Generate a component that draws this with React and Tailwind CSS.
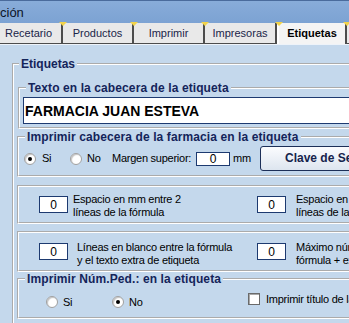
import React from "react";

function Radio({ on }) {
  return (
    <span className="flex h-[12px] w-[12px] shrink-0 items-center justify-center rounded-full border border-[#a0a0a0] bg-white shadow-[inset_1px_1px_1px_#c4c4c4]">
      {on && <span className="h-[4px] w-[4px] rounded-full bg-black" />}
    </span>
  );
}

function NumBox({ className }) {
  return (
    <div className={`flex h-[17px] w-[29px] shrink-0 items-center justify-center border border-[#1d3a70] bg-white text-[12px] leading-[12px] text-black ${className}`}>
      0
    </div>
  );
}

function Tri() {
  return (
    <span className="absolute -left-[4px] -top-[1px] h-0 w-0 border-l-[4px] border-r-[4px] border-t-[4px] border-l-transparent border-r-transparent border-t-[#f2d34a]" />
  );
}

export default function App() {
  return (
    <div className="h-[323px] w-[349px] overflow-hidden bg-[#c4d8ec] font-['Liberation_Sans',Arial,sans-serif] text-black">
      {/* title + tabs */}
      <div className="h-[44px] border-t border-[#4a6b9c] bg-gradient-to-b from-[#88acd9] to-[#7199cd]">
        <div className="flex h-[22px] items-center pl-0 text-[13px] leading-[13px] text-[#0c1428]">
          ción
        </div>
        <div className="flex h-[21px] items-end text-[11px] leading-[11px]">
          <div className="relative flex h-[21px] w-[63px] shrink-0 items-center border-b border-r-2 border-[#4c4c4c] bg-[#e9e9e9] pl-[5px] text-[#1a2448]">
            Recetario
          </div>
          <div className="relative flex h-[21px] w-[71px] shrink-0 items-center justify-center border-b border-r-2 border-[#4c4c4c] bg-[#e9e9e9] text-[#1a2448]">
            <Tri />
            Productos
          </div>
          <div className="relative flex h-[21px] w-[71px] shrink-0 items-center justify-center border-b border-r-2 border-[#4c4c4c] bg-[#e9e9e9] text-[#1a2448]">
            <Tri />
            Imprimir
          </div>
          <div className="relative flex h-[21px] w-[72px] shrink-0 items-center justify-center border-b border-r-2 border-[#4c4c4c] bg-[#e9e9e9] text-[#1a2448]">
            <Tri />
            Impresoras
          </div>
          <div className="relative flex h-[21px] w-[70px] shrink-0 items-center justify-center border-l-2 border-r-2 border-l-white border-r-[#4c4c4c] bg-[#f4f4f4] font-bold text-black">
            <Tri />
            Etiquetas
          </div>
          <div className="relative h-[21px] w-[40px] shrink-0 border-b border-[#4c4c4c] bg-[#e9e9e9]">
            <Tri />
          </div>
        </div>
      </div>
      <div className="h-[1px] bg-[#eef3f9]" />

      {/* outer group */}
      <fieldset className="ml-[12px] mt-[13px] w-[420px] border-2 border-white pb-[20px] [border-style:groove]">
        <legend className="ml-[5px] px-[2px] text-[12px] font-bold leading-[12px] text-[#14245a]">
          Etiquetas
        </legend>

        {/* group 1 */}
        <fieldset className="ml-[4px] mt-[12px] border-2 border-white pb-[3px] [border-style:groove]">
          <legend className="ml-[6px] px-[2px] text-[12px] font-bold leading-[12px] tracking-[0.1px] text-[#14245a]">
            Texto en la cabecera de la etiqueta
          </legend>
          <div className="ml-[3px] mt-[3px] flex h-[27px] items-center border border-[#1d3a70] bg-white pl-[1px] text-[14px] font-bold leading-[14px] text-black">
            FARMACIA JUAN ESTEVA
          </div>
        </fieldset>

        {/* group 2 */}
        <fieldset className="ml-[3px] mt-[2px] border-2 border-white pb-[4px] [border-style:groove]">
          <legend className="ml-[6px] px-[2px] text-[12px] font-bold leading-[12px] tracking-[0.1px] text-[#14245a]">
            Imprimir cabecera de la farmacia en la etiqueta
          </legend>
          <div className="mt-[3px] flex h-[25px] items-center text-[11px] leading-[11px] tracking-[-0.25px]">
            <div className="ml-[5px] flex w-[46px] items-center">
              <Radio on />
              <span className="ml-[6px]">Si</span>
            </div>
            <div className="flex w-[42px] items-center">
              <Radio />
              <span className="ml-[5px]">No</span>
            </div>
            <span className="w-[84px] shrink-0">Margen superior:</span>
            <div className="flex h-[14px] w-[34px] shrink-0 items-center justify-center border border-[#1d3a70] bg-white text-[12px] leading-[12px] tracking-normal">
              0
            </div>
            <span className="ml-[3px] w-[27px] shrink-0">mm</span>
            <div className="flex h-[25px] w-[200px] shrink-0 items-center rounded-[3px] border border-[#1c2f58] bg-gradient-to-b from-[#fbfcfe] to-[#dde5ef] pl-[24px] text-[12px] font-bold tracking-normal text-[#16244c]">
              Clave de Seguridad
            </div>
          </div>
        </fieldset>

        {/* box 3 */}
        <div className="ml-[3px] mt-[8px] flex border-2 border-white pb-[3px] pt-[6px] [border-style:groove]">
          <div className="flex h-[26px] items-start text-[11px] leading-[13px] tracking-[-0.25px]">
            <NumBox className="ml-[20px] mt-[3px]" />
            <div className="ml-[5px] w-[184px] shrink-0">
              Espacio en mm entre 2<br />líneas de la fórmula
            </div>
            <NumBox className="mt-[3px]" />
            <div className="ml-[10px] w-[200px] shrink-0">
              Espacio en mm entre 2<br />líneas de la etiqueta
            </div>
          </div>
        </div>

        {/* box 4 */}
        <div className="ml-[3px] mt-[7px] flex border-2 border-white pb-[3px] pt-[8px] [border-style:groove]">
          <div className="flex h-[26px] items-start text-[11px] leading-[13px] tracking-[-0.25px]">
            <NumBox className="ml-[20px] mt-[2px]" />
            <div className="ml-[9px] w-[180px] shrink-0">
              Líneas en blanco entre la fórmula<br />y el texto extra de etiqueta
            </div>
            <NumBox className="mt-[2px]" />
            <div className="ml-[10px] w-[200px] shrink-0">
              Máximo número de líneas de<br />fórmula + extra
            </div>
          </div>
        </div>

        {/* group 5 */}
        <fieldset className="ml-[3px] mt-[1px] border-2 border-white pb-[8px] [border-style:groove]">
          <legend className="ml-[6px] px-[2px] text-[12px] font-bold leading-[12px] tracking-[0.1px] text-[#14245a]">
            Imprimir Núm.Ped.: en la etiqueta
          </legend>
          <div className="mt-[10px] flex h-[14px] items-center text-[11px] leading-[11px] tracking-[-0.25px]">
            <div className="ml-[27px] flex w-[66px] items-center">
              <Radio />
              <span className="ml-[5px]">Si</span>
            </div>
            <div className="flex w-[136px] items-center">
              <Radio on />
              <span className="ml-[5px]">No</span>
            </div>
            <div className="mb-[6px] flex items-center">
              <span className="h-[12px] w-[12px] shrink-0 border border-[#6a6a6a] bg-white shadow-[inset_1px_1px_0_#a8a8a8]" />
              <span className="ml-[6px] whitespace-nowrap">Imprimir título de la etiqueta</span>
            </div>
          </div>
        </fieldset>
      </fieldset>
    </div>
  );
}
